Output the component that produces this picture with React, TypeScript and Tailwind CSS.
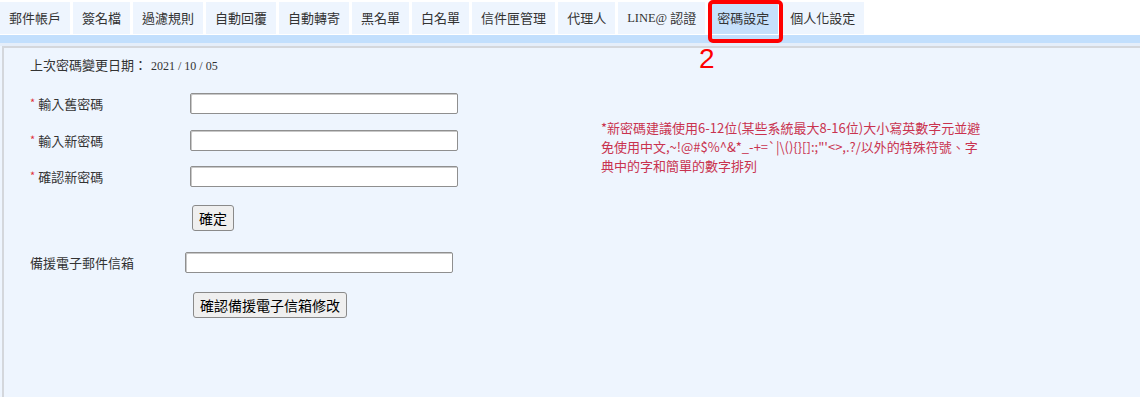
import React from 'react';

const tabs = ['郵件帳戶', '簽名檔', '過濾規則', '自動回覆', '自動轉寄', '黑名單', '白名單', '信件匣管理', '代理人', 'LINE@ 認證', '密碼設定', '個人化設定'];

const sans = { fontFamily: '"Noto Sans CJK TC", "Noto Sans", sans-serif' };

const NOTE =
  '*新密碼建議使用6-12位(某些系統最大8-16位)大小寫英數字元並避免使用中文,~!@#$%^&*_-+=`|\\(){}[]:;"\'<>,.?/以外的特殊符號、字典中的字和簡單的數字排列';

const Field: React.FC<{ label: string; required?: boolean; labelWidth: string }> = ({ label, required, labelWidth }) => (
  <div className="flex items-center h-[21px]">
    <div className={`${labelWidth} flex items-center text-[13px] text-[#333]`}>
      {required && <span className="text-[#e0303a] text-[11px] mr-[3px] mt-[-2px]">*</span>}
      <span>{label}</span>
    </div>
    <input
      type="text"
      className="w-[268px] h-[21px] bg-white border border-[#8f8f8f] rounded-[2px] shadow-[inset_1px_1px_0_#c8c8c8]"
    />
  </div>
);

const Btn: React.FC<{ children: React.ReactNode }> = ({ children }) => (
  <button className="h-[26px] px-[6px] text-[14px] text-black bg-[#efefef] border border-[#8a8a8a] rounded-[3px] leading-none">
    {children}
  </button>
);

const App: React.FC = () => {
  return (
    <div className="relative min-h-screen bg-white flex flex-col" style={sans}>
      {/* tab bar */}
      <div className="flex gap-[3px] pt-[2px]">
        {tabs.map((t) => (
          <div
            key={t}
            className={`h-[32px] px-[9px] flex items-center text-[13px] text-[#333] whitespace-nowrap ${t === '密碼設定' ? 'bg-[#c6e0fb]' : 'bg-[#eef5fe]'}`}
          >
            {t.startsWith('LINE@') ? (
              <>
                <span className="text-[12.5px]" style={{ fontFamily: '"Liberation Serif", serif' }}>LINE@&nbsp;</span>
                <span>認證</span>
              </>
            ) : (
              t
            )}
          </div>
        ))}
      </div>
      <div className="mt-[1px] h-[8px] bg-[#c2dffd]" />
      <div className="h-[3px] bg-[#e5eefa]" />

      <div className="flex-1 bg-[#eef5fe] pl-[2px] flex">
        <div className="flex-1 border-l-2 border-t-2 border-[#d4d7dc] pl-[26px] pt-[7px]">
          <div className="text-[13px] text-[#333] leading-[19px]">
            上次密碼變更日期：
            <span className="ml-[4px] text-[12px]" style={{ fontFamily: '"Liberation Serif", serif' }}>2021 / 10 / 05</span>
          </div>

          <div className="flex">
            <div className="w-[571px] pt-[17px]">
              <Field label="輸入舊密碼" required labelWidth="w-[160px]" />
              <div className="mt-[16px]">
                <Field label="輸入新密碼" required labelWidth="w-[160px]" />
              </div>
              <div className="mt-[15px]">
                <Field label="確認新密碼" required labelWidth="w-[160px]" />
              </div>
              <div className="mt-[18px] pl-[162px]">
                <Btn>確定</Btn>
              </div>
              <div className="mt-[21px]">
                <Field label="備援電子郵件信箱" labelWidth="w-[155px]" />
              </div>
              <div className="mt-[19px] pl-[163px]">
                <Btn>確認備援電子信箱修改</Btn>
              </div>
            </div>

            <p className="w-[385px] mt-[42px] text-[13px] leading-[19px] text-[#c9334f] break-all">{NOTE}</p>
          </div>
        </div>
      </div>

      {/* annotation overlay */}
      <div className="absolute left-[708px] top-0 w-[75px] h-[43px] border-4 border-[#f00] rounded-[5px]" />
      <div
        className="absolute left-[699px] top-[42px] text-[28px] leading-[34px] text-[#f00]"
        style={{ fontFamily: '"Liberation Sans", sans-serif' }}
      >
        2
      </div>
    </div>
  );
};

export default App;
